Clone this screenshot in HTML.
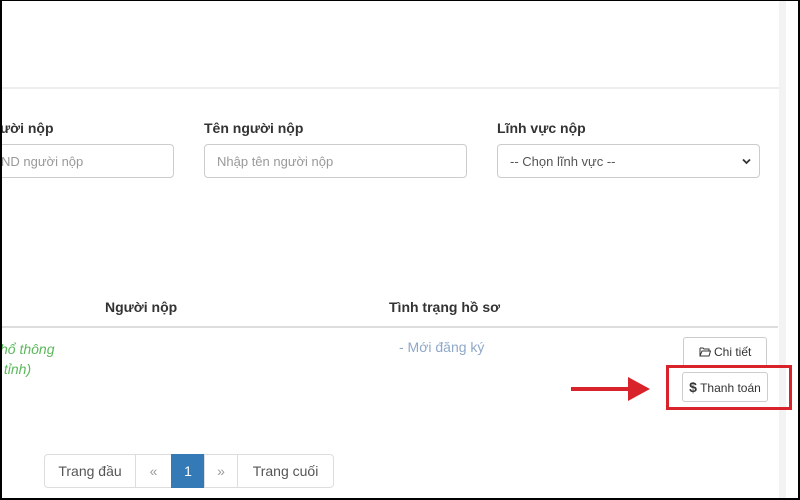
<!DOCTYPE html>
<html><head><meta charset="utf-8"><style>
*{box-sizing:border-box;margin:0;padding:0}
body{width:800px;height:500px;overflow:hidden;background:#fff;font-family:"Liberation Sans",sans-serif;position:relative}
.a{position:absolute}
.frame{left:0;top:0;width:800px;height:500px;border:2px solid #000;border-top-width:1px}
.lbl{font-size:14px;font-weight:bold;color:#333}
.inp{height:34px;border:1px solid #ccc;border-radius:4px;font-size:13px;color:#999;padding:9px 12px;background:#fff}
.btn{border:1px solid #ccc;border-radius:3px;background:#fff;font-size:12px;color:#333;text-align:center;line-height:28px;height:30px}
.pg{top:454px;height:34px;border:1px solid #ddd;font-size:14px;color:#555;line-height:32px;text-align:center}
</style></head><body>
<div class="a" style="left:0;top:87px;width:780px;height:2px;background:#eee"></div>
<div class="a" style="left:779px;top:0;width:7px;height:500px;background:#f3f3f3"></div>

<div class="a lbl" style="left:0;top:120px">ười nộp</div>
<div class="a lbl" style="left:204px;top:120px">Tên người nộp</div>
<div class="a lbl" style="left:497px;top:120px">Lĩnh vực nộp</div>
<div class="a inp" style="left:-20px;top:144px;width:194px;padding-left:20px">ND người nộp</div>
<div class="a inp" style="left:204px;top:144px;width:263px">Nhập tên người nộp</div>
<div class="a inp" style="left:497px;top:144px;width:263px;color:#555">-- Chọn lĩnh vực --
<svg class="a" style="right:8px;top:13px" width="9" height="7" viewBox="0 0 9 7"><path d="M1 1.5 4.5 5 8 1.5" stroke="#333" stroke-width="1.8" fill="none"/></svg></div>

<div class="a lbl" style="left:105px;top:299px">Người nộp</div>
<div class="a lbl" style="left:389px;top:299px">Tình trạng hồ sơ</div>
<div class="a" style="left:0;top:326px;width:778px;height:2px;background:#ddd"></div>

<div class="a" style="left:0;top:339px;font-size:14px;font-style:italic;color:#5cb85c;line-height:20px">hổ thông<br>&nbsp;tỉnh)</div>
<div class="a" style="left:399px;top:339px;font-size:14px;color:#8fa8c8">- Mới đăng ký</div>

<div class="a btn" style="left:683px;top:337px;width:84px">
<svg style="vertical-align:-1px" width="12" height="10" viewBox="0 0 12 10"><path d="M1 1h3l1 1h5v2M1 1v8h9l1.5-5H3L1 9" stroke="#333" fill="none"/></svg> Chi tiết</div>
<div class="a btn" style="left:682px;top:372px;width:86px"><b style="font-size:14px">$</b> Thanh toán</div>
<div class="a" style="left:666px;top:365px;width:126px;height:45px;border:3px solid #d9232a"></div>
<div class="a" style="left:571px;top:387px;width:60px;height:4px;background:#d9232a"></div>
<svg class="a" style="left:628px;top:377px" width="22" height="24" viewBox="0 0 22 24"><path d="M0 0 22 12 0 24Z" fill="#d9232a"/></svg>

<div class="a pg" style="left:44px;width:92px;border-radius:4px 0 0 4px">Trang đầu</div>
<div class="a pg" style="left:135px;width:37px;color:#999">«</div>
<div class="a pg" style="left:171px;width:34px;background:#337ab7;border-color:#337ab7;color:#fff">1</div>
<div class="a pg" style="left:204px;width:34px;color:#999">»</div>
<div class="a pg" style="left:237px;width:97px;border-radius:0 4px 4px 0">Trang cuối</div>

<div class="a frame"></div>
</body></html>
